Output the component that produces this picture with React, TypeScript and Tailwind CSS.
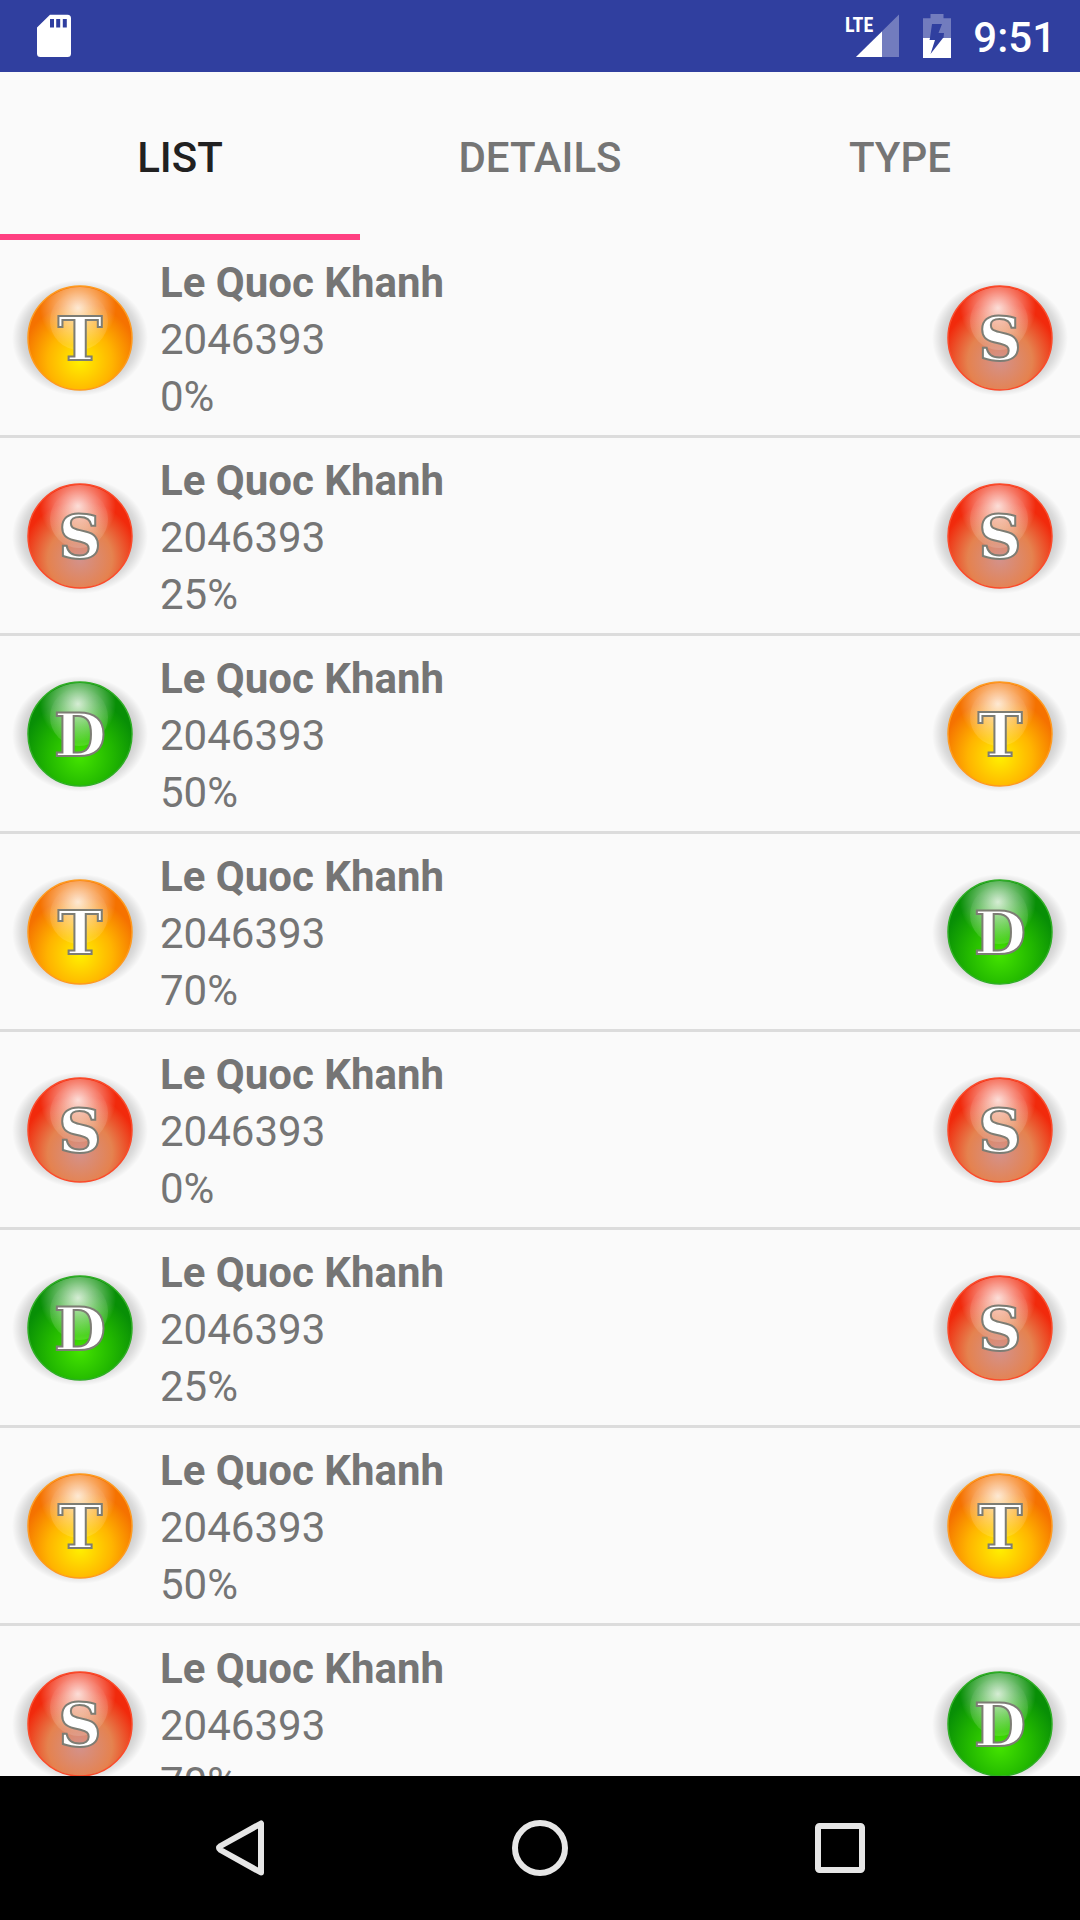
import { useState } from "react";

type Kind = "T" | "S" | "D";

const BALLS: Record<Kind, { core: string; mid: string; outer: string; rim: string }> = {
  T: { core: "#fff000", mid: "#ffb400", outer: "#f57200", rim: "#ff9a1e" },
  S: { core: "#d3928c", mid: "#e5824f", outer: "#f12a0c", rim: "#fb4a2a" },
  D: { core: "#44e400", mid: "#22b800", outer: "#088f06", rim: "#2fae25" },
};

const ROWS: { left: Kind; right: Kind; percent: string }[] = [
  { left: "T", right: "S", percent: "0%" },
  { left: "S", right: "S", percent: "25%" },
  { left: "D", right: "T", percent: "50%" },
  { left: "T", right: "D", percent: "70%" },
  { left: "S", right: "S", percent: "0%" },
  { left: "D", right: "S", percent: "25%" },
  { left: "T", right: "T", percent: "50%" },
  { left: "S", right: "D", percent: "70%" },
];

function BallDefs() {
  return (
    <svg className="absolute size-0" aria-hidden="true">
      <defs>
        {(Object.keys(BALLS) as Kind[]).map((k) => (
          <radialGradient key={k} id={`ball-${k}`} cx="0.5" cy="0.72" r="0.62">
            <stop offset="0" stopColor={BALLS[k].core} />
            <stop offset="0.5" stopColor={BALLS[k].mid} />
            <stop offset="0.9" stopColor={BALLS[k].outer} />
          </radialGradient>
        ))}
        <radialGradient id="gloss" gradientUnits="userSpaceOnUse" cx="66" cy="28" r="38">
          <stop offset="0" stopColor="#fff" stopOpacity="0.82" />
          <stop offset="0.5" stopColor="#fff" stopOpacity="0.4" />
          <stop offset="1" stopColor="#fff" stopOpacity="0" />
        </radialGradient>
        <linearGradient id="lobe" x1="0" y1="0" x2="0" y2="1">
          <stop offset="0" stopColor="#fff" stopOpacity="0" />
          <stop offset="0.5" stopColor="#fff" stopOpacity="0.1" />
          <stop offset="1" stopColor="#fff" stopOpacity="0.14" />
        </linearGradient>
        <radialGradient id="shadow">
          <stop offset="0.74" stopColor="#000" stopOpacity="0.2" />
          <stop offset="0.86" stopColor="#000" stopOpacity="0.12" />
          <stop offset="1" stopColor="#000" stopOpacity="0" />
        </radialGradient>
      </defs>
    </svg>
  );
}

function Ball({ kind }: { kind: Kind }) {
  return (
    <svg viewBox="0 0 136 120" className="h-[120px] w-[136px] shrink-0" role="img" aria-label={kind}>
      <ellipse cx="68" cy="58" rx="68" ry="58" fill="url(#shadow)" />
      <circle cx="68" cy="58" r="52" fill={`url(#ball-${kind})`} stroke={BALLS[kind].rim} strokeWidth="1.5" />
      <circle cx="68" cy="58" r="51" fill="url(#gloss)" />
      <ellipse cx="67" cy="41" rx="29" ry="29" fill="url(#lobe)" />
      <text
        x="68"
        y="80"
        textAnchor="middle"
        fontFamily="DejaVu Serif, serif"
        fontWeight="700"
        fontSize="60"
        fill="#fff"
        stroke="#7d7d74"
        strokeWidth="2"
      >
        {kind}
      </text>
    </svg>
  );
}

function StatusBar() {
  return (
    <header className="flex h-[72px] shrink-0 items-center bg-[#303f9f] pr-6 pl-9 text-white">
      <svg viewBox="0 0 36 44" className="h-11 w-9" aria-hidden="true">
        <path
          fill="#fff"
          fillRule="evenodd"
          d="M14 .7H31.500a3.500 3.500 0 0 1 3.500 3.500V39.500a3.500 3.500 0 0 1-3.500 3.500H4.500A3.500 3.500 0 0 1 1 39.500V13.500ZM14 5V13.500h4V5ZM20.200 5V13.500h4V5ZM26.800 5V13.500h4V5Z"
        />
      </svg>
      <div className="ml-auto flex items-center">
        <svg viewBox="0 0 54 44" className="h-11 w-[54px]" role="img" aria-label="LTE signal">
          <path d="M54 .5V43H11Z" fill="#fff" fillOpacity="0.32" />
          <path d="M37 17.500V43H11Z" fill="#fff" />
          <text x="0" y="18" fontFamily="Roboto Condensed, Liberation Sans Narrow, Roboto" fontWeight="700" fontSize="20" fill="#fff">
            LTE
          </text>
        </svg>
        <svg viewBox="0 0 28 44" className="ml-6 h-11 w-7" role="img" aria-label="Battery charging">
          <path
            d="M7.500 0h13V4.300H28V24H20.500L21 19H15.500L19 10H9L7 24H0V4.300H7.500Z"
            fill="#fff"
            fillOpacity="0.32"
          />
          <path d="M0 24H7L6.500 26H12L7.500 40L20 24H28V44H0Z" fill="#fff" />
        </svg>
        <span className="ml-[22px] pt-1 text-[42px] leading-[50px] font-medium">9:51</span>
      </div>
    </header>
  );
}

const TABS = ["LIST", "DETAILS", "TYPE"];

export default function App() {
  const [active, setActive] = useState("LIST");
  return (
    <div className="flex h-screen flex-col overflow-hidden bg-[#fafafa] font-['Roboto',sans-serif]">
      <BallDefs />
      <StatusBar />
      <div role="tablist" className="grid h-[168px] shrink-0 grid-cols-3">
        {TABS.map((tab) => (
          <button
            key={tab}
            role="tab"
            aria-selected={tab === active}
            onClick={() => setActive(tab)}
            className={
              tab === active
                ? "border-b-6 border-[#ff4081] pt-2 text-[42px] font-medium text-[#212121]"
                : "border-b-6 border-transparent pt-2 text-[42px] font-medium text-[#757575]"
            }
          >
            {tab}
          </button>
        ))}
      </div>
      <ul className="min-h-0 flex-1 divide-y-3 divide-[#dcdcdc] overflow-y-auto [scrollbar-width:none]">
        {ROWS.map((row, i) => (
          <li key={i} className="flex items-center gap-3 px-3 pt-3.5 pb-2.5">
            <Ball kind={row.left} />
            <div className="min-w-0 flex-1 text-[42px] leading-[57px] text-[#757575]">
              <p className="font-bold">Le Quoc Khanh</p>
              <p>2046393</p>
              <p>{row.percent}</p>
            </div>
            <Ball kind={row.right} />
          </li>
        ))}
      </ul>
      <nav className="flex h-36 shrink-0 items-center justify-center bg-black px-[90px]">
        <button aria-label="Back" className="flex flex-1 justify-center">
          <svg viewBox="0 0 48 56" className="h-14 w-12" fill="none" stroke="#e6e6e6" strokeWidth="6" strokeLinejoin="round">
            <path d="M45 3.500V52.500L4.500 30Q1.500 28 4.500 26Z" />
          </svg>
        </button>
        <button aria-label="Home" className="flex flex-1 justify-center">
          <svg viewBox="0 0 56 56" className="size-14" fill="none" stroke="#e6e6e6" strokeWidth="6">
            <circle cx="28" cy="28" r="25" />
          </svg>
        </button>
        <button aria-label="Recent apps" className="flex flex-1 justify-center">
          <svg viewBox="0 0 50 50" className="size-[50px]" fill="none" stroke="#e6e6e6" strokeWidth="6">
            <rect x="3" y="3" width="44" height="44" rx="1.500" />
          </svg>
        </button>
      </nav>
    </div>
  );
}
